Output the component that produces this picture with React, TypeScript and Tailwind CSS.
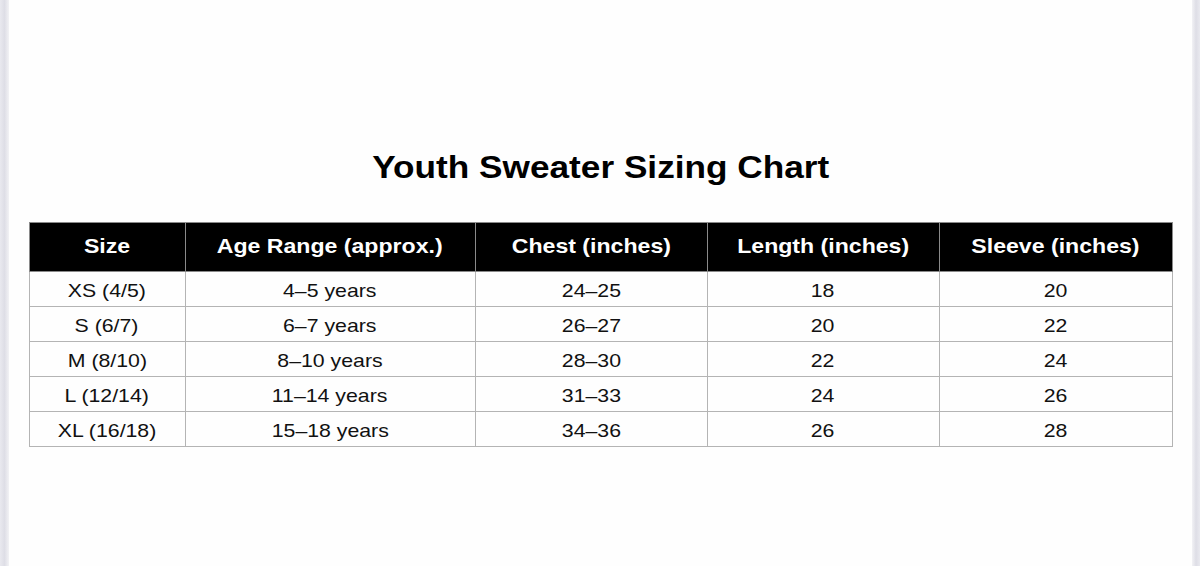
const headers = ['Size', 'Age Range (approx.)', 'Chest (inches)', 'Length (inches)', 'Sleeve (inches)'];

const rows = [
  ['XS (4/5)', '4–5 years', '24–25', '18', '20'],
  ['S (6/7)', '6–7 years', '26–27', '20', '22'],
  ['M (8/10)', '8–10 years', '28–30', '22', '24'],
  ['L (12/14)', '11–14 years', '31–33', '24', '26'],
  ['XL (16/18)', '15–18 years', '34–36', '26', '28'],
];

const colWidths = ['w-[156px]', 'w-[290px]', 'w-[232px]', 'w-[232px]', 'w-[233px]'];

export default function App() {
  return (
    <div className="flex h-[566px] w-[1200px] bg-white font-['Liberation_Sans',Arial,sans-serif] text-[#111]">
      {/* left page edge */}
      <div className="w-[9px] shrink-0 bg-gradient-to-r from-[#e9e9ef] via-[#dedee6] to-[#f2f2f5]" />

      <div className="flex flex-1 flex-col items-center bg-[#fefefe]">
        <h1 className="mt-[151px] text-[32px] leading-none font-bold text-black">
          <span className="inline-block scale-x-[1.1]">Youth Sweater Sizing Chart</span>
        </h1>

        <table className="mt-[39px] table-fixed border-collapse border border-[#a9a9a9]">
          <colgroup>
            {colWidths.map((w, i) => (
              <col key={i} className={w} />
            ))}
          </colgroup>
          <thead>
            <tr className="h-[49px] bg-black">
              {headers.map((h) => (
                <th key={h} className="border border-[#8a8a8a] p-0 text-center text-[21px] font-bold text-white">
                  <span className="inline-block -translate-y-[1px] scale-x-[1.1]">{h}</span>
                </th>
              ))}
            </tr>
          </thead>
          <tbody>
            {rows.map((r) => (
              <tr key={r[0]} className="h-[35px]">
                {r.map((c, i) => (
                  <td key={i} className="border border-[#b4b4b4] p-0 text-center text-[19px] leading-none">
                    <span className="inline-block translate-y-[1px] scale-x-[1.12]">{c}</span>
                  </td>
                ))}
              </tr>
            ))}
          </tbody>
        </table>
      </div>

      {/* right page edge */}
      <div className="w-[8px] shrink-0 bg-gradient-to-r from-[#f2f2f5] via-[#dedee6] to-[#e9e9ef]" />
    </div>
  );
}
